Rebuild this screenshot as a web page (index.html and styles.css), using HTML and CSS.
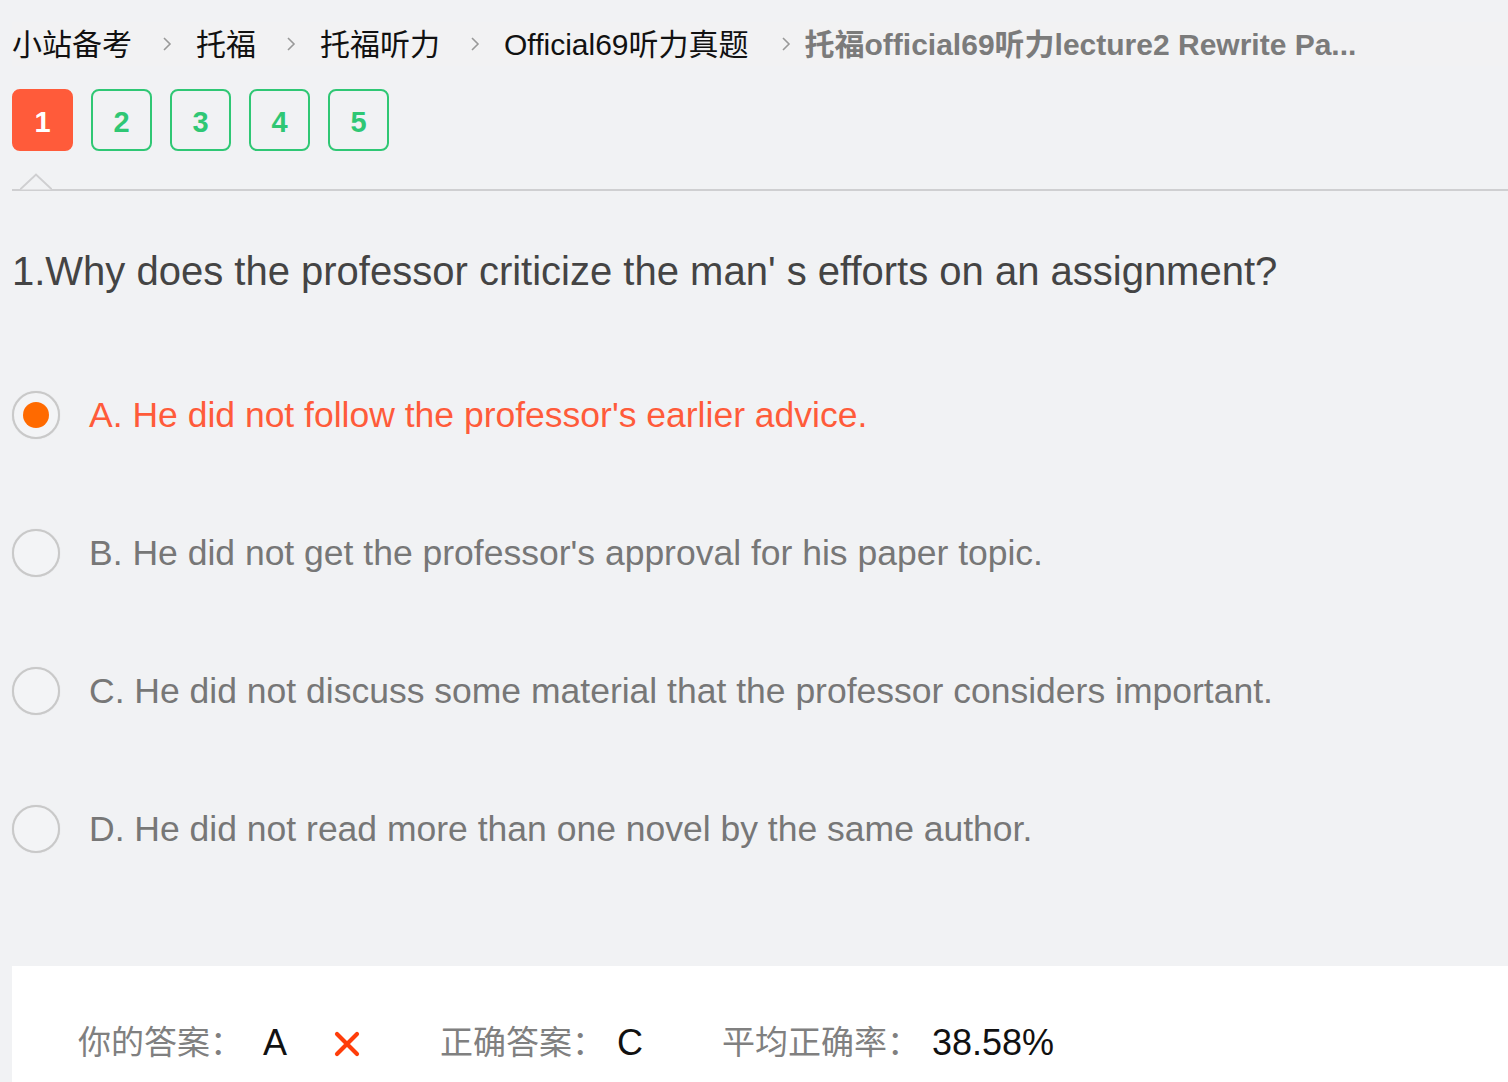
FILE: index.html
```html
<!DOCTYPE html>
<html lang="zh">
<head>
<meta charset="utf-8">
<title>托福official69听力lecture2</title>
<link rel="stylesheet" href="styles.css">
</head>
<body>
<div class="page">
  <nav class="crumbs">
    <span class="crumb">小站备考</span>
    <span class="sep"><svg width="10" height="16" viewBox="0 0 10 16"><path d="M2 2 L8 8 L2 14" fill="none" stroke="#999" stroke-width="1.6"/></svg></span>
    <span class="crumb">托福</span>
    <span class="sep"><svg width="10" height="16" viewBox="0 0 10 16"><path d="M2 2 L8 8 L2 14" fill="none" stroke="#999" stroke-width="1.6"/></svg></span>
    <span class="crumb">托福听力</span>
    <span class="sep"><svg width="10" height="16" viewBox="0 0 10 16"><path d="M2 2 L8 8 L2 14" fill="none" stroke="#999" stroke-width="1.6"/></svg></span>
    <span class="crumb">Official69听力真题</span>
    <span class="sep sep-last"><svg width="10" height="16" viewBox="0 0 10 16"><path d="M2 2 L8 8 L2 14" fill="none" stroke="#999" stroke-width="1.6"/></svg></span>
    <span class="crumb current">托福official69听力lecture2 Rewrite Pa...</span>
  </nav>

  <div class="tabs">
    <span class="tab active">1</span>
    <span class="tab">2</span>
    <span class="tab">3</span>
    <span class="tab">4</span>
    <span class="tab">5</span>
  </div>

  <div class="divider">
    <svg class="notch" width="32" height="18" viewBox="0 0 32 18"><path d="M0 16.5 L16 1.5 L32 16.5" fill="#f1f2f4" stroke="#cfcfd1" stroke-width="2"/></svg>
  </div>

  <h1 class="question">1.Why does the professor criticize the man' s efforts on an assignment?</h1>

  <ul class="options">
    <li class="option chosen"><span class="radio"><span class="dot"></span></span><span class="opt-text">A. He did not follow the professor's earlier advice.</span></li>
    <li class="option"><span class="radio"></span><span class="opt-text">B. He did not get the professor's approval for his paper topic.</span></li>
    <li class="option"><span class="radio"></span><span class="opt-text">C. He did not discuss some material that the professor considers important.</span></li>
    <li class="option"><span class="radio"></span><span class="opt-text">D. He did not read more than one novel by the same author.</span></li>
  </ul>

  <div class="result">
    <span class="label">你的答案：</span><span class="val first">A</span>
    <svg class="wrong" width="28" height="28" viewBox="0 0 28 28"><path d="M4 4 L24 24 M24 4 L4 24" stroke="#ff3d0a" stroke-width="4.2" stroke-linecap="round"/></svg>
    <span class="label gap">正确答案：</span><span class="val">C</span>
    <span class="label gap">平均正确率：</span><span class="val">38.58%</span>
  </div>
</div>
</body>
</html>
```

FILE: styles.css
```css
html, body {
  margin: 0;
  padding: 0;
  background: #f1f2f4;
  overflow: hidden;
}
body {
  font-family: "Liberation Sans", "Noto Sans CJK SC", sans-serif;
  color: #111;
}
.page {
  padding: 22px 0 0 12px;
}
.crumbs {
  display: flex;
  align-items: center;
  height: 44px;
  background: #f2f2f3;
  font-size: 30px;
  line-height: 40px;
  white-space: nowrap;
}
.crumb {
  color: #111;
  position: relative;
  top: 1px;
}
.sep {
  display: flex;
  align-items: center;
  margin: 0 24px 0 30px;
}
.sep-last {
  margin: 0 14px 0 32px;
}
.crumb.current {
  color: #7b7b7b;
  font-weight: bold;
  font-size: 30px;
}
.tabs {
  display: flex;
  gap: 18px;
  margin-top: 23px;
}
.tab {
  box-sizing: border-box;
  width: 61px;
  height: 62px;
  padding-top: 5px;
  border: 2px solid #2fc774;
  border-radius: 8px;
  color: #2fc774;
  font-weight: bold;
  font-size: 29px;
  display: flex;
  align-items: center;
  justify-content: center;
}
.tab.active {
  background: #ff5b3a;
  border-color: #ff5b3a;
  color: #fff;
}
.divider {
  position: relative;
  height: 2px;
  background: #cfcfd1;
  margin-top: 38px;
}
.notch {
  position: absolute;
  left: 8px;
  top: -16px;
}
.question {
  margin: 56px 0 0 0;
  font-size: 40px;
  font-weight: normal;
  color: #444;
  line-height: 48px;
}
.options {
  list-style: none;
  margin: 96px 0 0 0;
  padding: 0;
  display: flex;
  flex-direction: column;
  gap: 90px;
}
.option {
  display: flex;
  align-items: center;
  height: 48px;
  font-size: 35.5px;
  color: #777;
}
.option.chosen {
  color: #ff5b3a;
}
.radio {
  box-sizing: border-box;
  width: 48px;
  height: 48px;
  border-radius: 50%;
  border: 2px solid #c9c9c9;
  box-shadow: 0 0 1px rgba(0,0,0,0.15);
  background: #f3f4f6;
  display: flex;
  align-items: center;
  justify-content: center;
  margin-right: 29px;
  flex-shrink: 0;
}
.dot {
  width: 26px;
  height: 26px;
  border-radius: 50%;
  background: #ff6a00;
}
.result {
  margin-top: 113px;
  background: #fff;
  height: 140px;
  box-sizing: border-box;
  padding: 57px 0 0 66px;
  display: flex;
  align-items: flex-start;
}
.result .label {
  color: #808080;
  font-size: 33px;
  line-height: 40px;
}
.result .val {
  color: #111;
  font-size: 36px;
  line-height: 40px;
  margin-left: 12px;
}
.result .val.first {
  margin-left: 20px;
}
.result .label.gap {
  margin-left: 79px;
}
.wrong {
  margin: 7px 0 0 46px;
}
```
